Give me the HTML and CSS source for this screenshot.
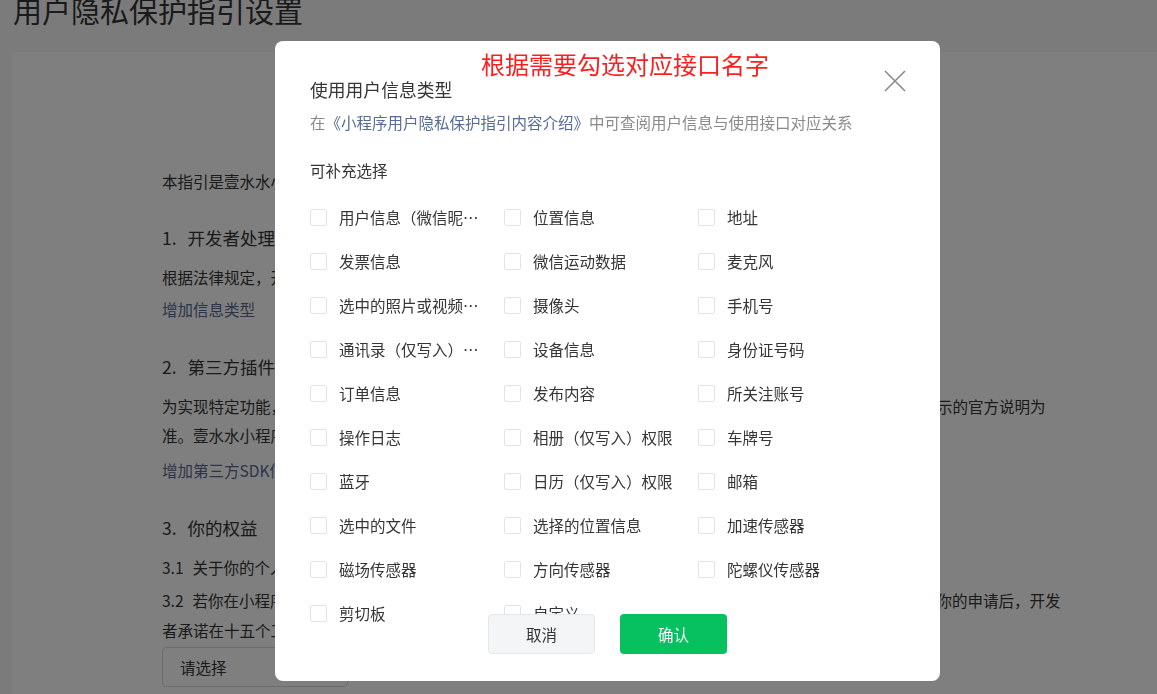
FILE: index.html
```html
<!DOCTYPE html>
<html lang="zh-CN">
<head>
    <meta charset="UTF-8">
    <meta name="viewport" content="width=device-width, initial-scale=1.0">
    <title>用户隐私保护指引设置</title>
    <link rel="stylesheet" href="styles.css">
</head>
<body>
    <h1 class="page-title">用户隐私保护指引设置</h1>

    <div class="card">
        <p class="line intro">本指引是壹水水小程序开发者为处理你的个人信息而制定。</p>

        <h3 class="sec-title first"><span class="num">1.</span>开发者处理的信息</h3>
        <p class="line sec-text">根据法律规定，开发者仅处理实现小程序功能所必要的信息。</p>
        <a class="line sec-link">增加信息类型</a>

        <h3 class="sec-title"><span class="num">2.</span>第三方插件信息</h3>
        <p class="line sec-text two">为实现特定功能，开发者可能会接入由第三方提供的插件。第三方插件收集和处理你的个人信息的规则，请以其公示的官方说明为<br>准。壹水水小程序接入的第三方插件信息如下：</p>
        <a class="line sec-link">增加第三方SDK信息</a>

        <h3 class="sec-title"><span class="num">3.</span>你的权益</h3>
        <p class="line sec-text"><span class="sub-num">3.1</span>关于你的个人信息，你可以通过以下方式与开发者联系，行使查阅、复制、更正、删除等法定权利。</p>
        <p class="line sub-item"><span class="sub-num">3.2</span>若你在小程序中注册了账号，你可以通过以下方式与开发者联系，申请注销你在小程序中使用的账号。在受理你的申请后，开发<br>者承诺在十五个工作日内完成核查和处理，并在法律法规规定的期限内回复你。</p>
        <div class="select-box">请选择</div>
    </div>

    <div class="mask"></div>

    <div class="dialog">
        <div class="note">根据需要勾选对应接口名字</div>
        <svg class="close" width="22" height="22" viewBox="0 0 22 22">
            <path d="M1 1 L21 21 M21 1 L1 21" stroke="#8a8a8a" stroke-width="1.6" fill="none"/>
        </svg>

        <div class="dialog-title">使用用户信息类型</div>
        <div class="dialog-desc">在<a>《小程序用户隐私保护指引内容介绍》</a>中可查阅用户信息与使用接口对应关系</div>
        <div class="dialog-label">可补充选择</div>

        <div class="check-grid">
            <label class="check"><span class="box"></span><span class="text">用户信息（微信昵称、头像）</span></label>
            <label class="check"><span class="box"></span><span class="text">位置信息</span></label>
            <label class="check"><span class="box"></span><span class="text">地址</span></label>

            <label class="check"><span class="box"></span><span class="text">发票信息</span></label>
            <label class="check"><span class="box"></span><span class="text">微信运动数据</span></label>
            <label class="check"><span class="box"></span><span class="text">麦克风</span></label>

            <label class="check"><span class="box"></span><span class="text">选中的照片或视频信息</span></label>
            <label class="check"><span class="box"></span><span class="text">摄像头</span></label>
            <label class="check"><span class="box"></span><span class="text">手机号</span></label>

            <label class="check"><span class="box"></span><span class="text">通讯录（仅写入）权限</span></label>
            <label class="check"><span class="box"></span><span class="text">设备信息</span></label>
            <label class="check"><span class="box"></span><span class="text">身份证号码</span></label>

            <label class="check"><span class="box"></span><span class="text">订单信息</span></label>
            <label class="check"><span class="box"></span><span class="text">发布内容</span></label>
            <label class="check"><span class="box"></span><span class="text">所关注账号</span></label>

            <label class="check"><span class="box"></span><span class="text">操作日志</span></label>
            <label class="check"><span class="box"></span><span class="text">相册（仅写入）权限</span></label>
            <label class="check"><span class="box"></span><span class="text">车牌号</span></label>

            <label class="check"><span class="box"></span><span class="text">蓝牙</span></label>
            <label class="check"><span class="box"></span><span class="text">日历（仅写入）权限</span></label>
            <label class="check"><span class="box"></span><span class="text">邮箱</span></label>

            <label class="check"><span class="box"></span><span class="text">选中的文件</span></label>
            <label class="check"><span class="box"></span><span class="text">选择的位置信息</span></label>
            <label class="check"><span class="box"></span><span class="text">加速传感器</span></label>

            <label class="check"><span class="box"></span><span class="text">磁场传感器</span></label>
            <label class="check"><span class="box"></span><span class="text">方向传感器</span></label>
            <label class="check"><span class="box"></span><span class="text">陀螺仪传感器</span></label>

            <label class="check"><span class="box"></span><span class="text">剪切板</span></label>
            <label class="check"><span class="box"></span><span class="text">自定义</span></label>
        </div>

        <div class="dialog-footer">
            <button class="btn btn-cancel">取消</button>
            <button class="btn btn-ok">确认</button>
        </div>
    </div>
</body>
</html>
```

FILE: styles.css
```css
body {
    font-family: "Noto Sans CJK SC", "Noto Sans", sans-serif;
    margin: 0;
    padding: 0;
    background-color: #f6f7f8;
    color: #353535;
    overflow: hidden;
    height: 694px;
}

.page-title {
    margin: -4px 0 0 13px;
    font-size: 29px;
    line-height: 29px;
    font-weight: normal;
    color: #353535;
}

.card {
    margin: 27px 0 0 12px;
    padding: 114px 0 0 150px;
    background-color: #fff;
    height: 528px;
    overflow: hidden;
    white-space: nowrap;
}

.line {
    display: block;
    margin: 0;
    font-size: 15.5px;
    line-height: 30px;
}

.sec-title {
    margin: 28px 0 0;
    font-size: 17.5px;
    line-height: 30px;
    font-weight: normal;
}

.sec-title.first {
    margin-top: 27px;
}

.num {
    margin-right: 11px;
}

.sec-text {
    margin-top: 9px;
}

.sec-text.two {
    line-height: 29px;
    margin-top: 10px;
}

.sec-link {
    color: #576b95;
    margin-top: 2px;
}

.sec-text.two + .sec-link {
    margin-top: 5px;
}

.sub-num {
    margin-right: 9px;
}

.sub-item {
    margin-top: 3px;
}

.select-box {
    width: 167px;
    height: 38px;
    margin-top: 2px;
    padding-left: 17px;
    line-height: 38px;
    font-size: 15.5px;
    border: 1px solid #d9d9d9;
    border-radius: 4px;
    background-color: #fff;
}

.mask {
    position: fixed;
    left: 0;
    top: 0;
    right: 0;
    bottom: 0;
    background-color: rgba(0, 0, 0, 0.5);
}

.dialog {
    position: fixed;
    left: 275px;
    top: 41px;
    width: 630px;
    height: 605px;
    padding: 35px 0 0 35px;
    background-color: #fff;
    border-radius: 8px;
    overflow: hidden;
}

.note {
    position: absolute;
    left: 206px;
    top: 8px;
    font-size: 24px;
    line-height: 30px;
    color: #ff1e1e;
}

.close {
    position: absolute;
    right: 34px;
    top: 29px;
}

.dialog-title {
    font-size: 17.8px;
    line-height: 26px;
    color: #353535;
}

.dialog-desc {
    margin-top: 8px;
    font-size: 15.5px;
    line-height: 24px;
    color: #8a8a8a;
}

.dialog-desc a {
    color: #576b95;
}

.dialog-label {
    margin-top: 24px;
    font-size: 15.5px;
    line-height: 24px;
    color: #353535;
}

.check-grid {
    margin-top: 13px;
    display: grid;
    grid-template-columns: repeat(3, 194px);
    grid-auto-rows: 44px;
}

.check {
    display: flex;
    align-items: center;
    font-size: 15.5px;
    color: #353535;
}

.box {
    flex: none;
    width: 15px;
    height: 15px;
    margin-right: 12px;
    border: 1px solid #e3e3e3;
    border-radius: 2px;
    background-color: #fff;
}

.text {
    max-width: 140px;
    white-space: nowrap;
    overflow: hidden;
    text-overflow: ellipsis;
}

.dialog-footer {
    position: absolute;
    left: 0;
    right: 0;
    bottom: 27px;
    display: flex;
    justify-content: center;
    gap: 25px;
}

.btn {
    width: 107px;
    height: 40px;
    font-family: inherit;
    font-size: 15.5px;
    border-radius: 4px;
    cursor: pointer;
}

.btn-cancel {
    background-color: #f4f5f6;
    border: 1px solid #e6e7e8;
    color: #353535;
}

.btn-ok {
    background-color: #07c160;
    border: none;
    color: #fff;
}
```
